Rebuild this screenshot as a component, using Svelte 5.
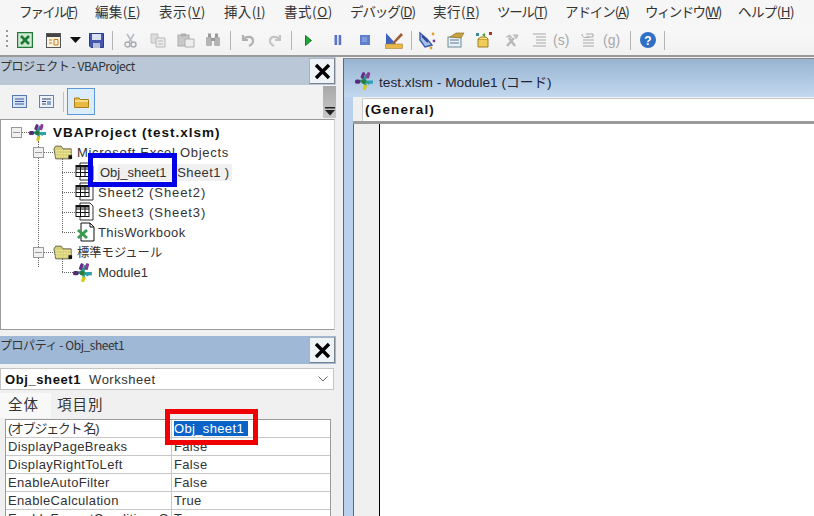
<script>
  const menus = [
    ['ファイル(', 'F', ')', 20, -1.9], ['編集(', 'E', ')', 96, 0.36], ['表示(', 'V', ')', 160, 0.58], ['挿入(', 'I', ')', 225, 0.34],
    ['書式(', 'O', ')', 285, 0.56], ['デバッグ(', 'D', ')', 351, -1.07], ['実行(', 'R', ')', 434, 0.5], ['ツール(', 'T', ')', 498, -1.33],
    ['アドイン(', 'A', ')', 566, -1.07], ['ウィンドウ(', 'W', ')', 646, -1.6], ['ヘルプ(', 'H', ')', 739, -0.6]
  ];
  const menuWidths = menus.map((m, i) => (i + 1 < menus.length ? menus[i + 1][3] - m[3] : 70));
  const props = [
    ['(オブジェクト 名)', 'Obj_sheet1', true],
    ['DisplayPageBreaks', 'False'],
    ['DisplayRightToLeft', 'False'],
    ['EnableAutoFilter', 'False'],
    ['EnableCalculation', 'True'],
    ['EnableFormatConditionsCalculation', 'True']
  ];
</script>

{#snippet moduleIcon(s)}
  <svg width={s} height={s} viewBox="0 0 18 18">
    <path d="M3 10 L9 9 L14 12 M9 9 L11 3 M9 9 L7 5 M9 9 L10 15" stroke="#2a9a8a" stroke-width="2.4" fill="none"/>
    <rect x="6" y="1" width="3" height="6" rx="1" fill="#6a2a8a" transform="rotate(20 7 4)"/>
    <rect x="11" y="1" width="3" height="6" rx="1" fill="#8a3a9a" transform="rotate(15 12 4)"/>
    <rect x="0" y="8" width="5" height="4" rx="1.5" fill="#5a2a7a"/>
    <rect x="12" y="9" width="5" height="3" fill="#30a0b0"/>
    <rect x="8" y="13" width="3" height="5" rx="1" fill="#d8c820" transform="rotate(20 9 15)"/>
    <circle cx="8" cy="10" r="2.2" fill="#2a7a3a"/>
  </svg>
{/snippet}

{#snippet folder()}
  <svg width="20" height="15" viewBox="0 0 22 16">
    <path d="M1 4 L3 1 H9 L11 4 H20 V15 H3 Z" fill="#d8d078" stroke="#5a5a48"/>
    <path d="M3 6 H20 M3 9 H20 M3 12 H18" stroke="#f4efb0" stroke-width="1" stroke-dasharray="2 1"/>
    <rect x="17" y="11" width="4" height="4" fill="#111"/>
  </svg>
{/snippet}

{#snippet sheet()}
  <svg width="21" height="20" viewBox="0 0 21 20">
    <path d="M5 1 H15 L18 4 V18 H5 Z" fill="#fff" stroke="#333"/>
    <rect x="1" y="3.5" width="13" height="11" fill="#fff" stroke="#111"/>
    <path d="M1 7 H14 M1 10.5 H14 M5.5 3.5 V14.5 M10 3.5 V14.5" stroke="#111"/>
    <path d="M1 4.5 H14" stroke="#111" stroke-width="2"/>
  </svg>
{/snippet}

<div class="app">
  <div class="menubar">
    {#each menus as m, i}
      <span class="menu" style="width:{menuWidths[i]}px;letter-spacing:{m[4]}px">{m[0]}<u>{m[1]}</u>{m[2]}</span>
    {/each}
  </div>

  <div class="toolbar">
    <span class="grip"></span>
    <svg class="ti m9" width="16" height="16" viewBox="0 0 16 16"><rect x="0.5" y="0.5" width="15" height="15" fill="#cfe8d0" stroke="#1f7a3a" stroke-width="1.4"/><path d="M4 4 L12 12 M12 4 L4 12" stroke="#1f7a3a" stroke-width="2.6"/></svg>
    <svg class="ti m13" width="15" height="15" viewBox="0 0 15 15"><rect x="0.5" y="0.5" width="14" height="14" fill="#fbf3e2" stroke="#555"/><rect x="1" y="1" width="13" height="3" fill="#444"/><path d="M3 7 H6 M3 10 H6 M8 6.5 H12 V12 H8 Z" stroke="#c8781e" fill="none"/></svg>
    <svg class="ti m9" width="11" height="6" viewBox="0 0 11 6"><path d="M0 0 H11 L5.5 6 Z" fill="#111"/></svg>
    <svg class="ti m8" width="15" height="15" viewBox="0 0 15 15"><path d="M0.5 0.5 H14.5 V14.5 H2 L0.5 13 Z" fill="#4458b0" stroke="#2c3a88"/><rect x="3" y="1" width="9" height="6" fill="#d8e0f4"/><rect x="4" y="10" width="7" height="5" fill="#b8c0d8"/></svg>
    <span class="sep m8"></span>
    <svg class="ti m11" width="13" height="15" viewBox="0 0 13 15"><path d="M3 1 L8 9 M10 1 L5 9" stroke="#b8bcc4" stroke-width="1.6"/><circle cx="3.5" cy="11.5" r="2.5" fill="none" stroke="#a8acb4" stroke-width="1.4"/><circle cx="9.5" cy="11.5" r="2.5" fill="none" stroke="#a8acb4" stroke-width="1.4"/></svg>
    <svg class="ti m13" width="16" height="15" viewBox="0 0 16 15"><path d="M1 1 H8 V10 H1 Z" fill="#dcdcdc" stroke="#c0c0c0"/><path d="M6 5 H15 V14 H6 Z" fill="#ececec" stroke="#b8b8b8"/><path d="M8 8 H13 M8 11 H13" stroke="#b8b8b8"/></svg>
    <svg class="ti m11" width="18" height="15" viewBox="0 0 18 15"><rect x="1" y="2" width="11" height="11" fill="#c8c8c8" stroke="#aaa"/><rect x="4" y="0.5" width="5" height="3" fill="#b0b0b0"/><path d="M8 6 H17 V14 H8 Z" fill="#eee" stroke="#b0b0b0"/></svg>
    <svg class="ti m10" width="16" height="14" viewBox="0 0 16 14"><rect x="1" y="4" width="6" height="9" rx="1" fill="#b4b4b4"/><rect x="9" y="4" width="6" height="9" rx="1" fill="#b4b4b4"/><rect x="3" y="0.5" width="3" height="4" fill="#999"/><rect x="10" y="0.5" width="3" height="4" fill="#999"/><rect x="6" y="5" width="4" height="3" fill="#999"/></svg>
    <span class="sep m9"></span>
    <svg class="ti m10" width="14" height="13" viewBox="0 0 14 13"><path d="M2 1 V6 H7 M2.5 5.5 C5 2 11 2 12 6 C12.5 9 10 11 8 12" fill="none" stroke="#b0b0b0" stroke-width="2.2"/></svg>
    <svg class="ti m13" width="14" height="13" viewBox="0 0 14 13"><path d="M12 1 V6 H7 M11.5 5.5 C9 2 3 2 2 6 C1.5 9 4 11 6 12" fill="none" stroke="#c4c4c4" stroke-width="2.2"/></svg>
    <span class="sep m9"></span>
    <svg class="ti m13" width="7" height="11" viewBox="0 0 7 11"><path d="M0.5 0.5 L6.5 5.5 L0.5 10.5 Z" fill="#22a838" stroke="#167a28"/></svg>
    <svg class="ti m22" width="8" height="10" viewBox="0 0 8 10"><rect x="0.5" width="2.6" height="10" fill="#5a74c8"/><rect x="4.6" width="2.6" height="10" fill="#5a74c8"/></svg>
    <svg class="ti m18" width="10" height="10" viewBox="0 0 10 10"><rect width="10" height="10" fill="#5f80cc"/><rect x="2" y="2" width="5" height="5" fill="#7f9cdc"/></svg>
    <svg class="ti m15" width="18" height="17" viewBox="0 0 18 17"><path d="M1 1 L1 12 L11 12 Z" fill="#3e62c4"/><path d="M7 11 L16 1 L18 3 L9 12 Z" fill="#a05a30"/><rect x="0.5" y="12" width="17" height="4.5" fill="#e8b84a" stroke="#a88030" stroke-width="0.6"/></svg>
    <span class="sep m8"></span>
    <svg class="ti m7" width="17" height="19" viewBox="0 0 17 19"><path d="M1 2 L8 8 L13 14 L6 16 L1 9 Z" fill="#a8c0e8" stroke="#3a5aa8" stroke-width="1.4"/><path d="M3 5 L9 11" stroke="#2a4a98" stroke-width="2"/><circle cx="14" cy="3" r="1.4" fill="#e0a020"/><circle cx="15" cy="10" r="1.4" fill="#7a3a9a"/><circle cx="12" cy="17" r="1.4" fill="#e0a020"/></svg>
    <svg class="ti m11" width="18" height="16" viewBox="0 0 18 16"><rect x="1" y="5" width="13" height="10" fill="#e8f0f4" stroke="#6a8a9a"/><path d="M3 8 H12 M3 11 H12" stroke="#5a7a9a"/><path d="M3 5 L9 1 H17 L14 6 Z" fill="#c8a040" stroke="#7a6a20" stroke-width="0.6"/></svg>
    <svg class="ti m10" width="17" height="16" viewBox="0 0 17 16"><path d="M3 7 H13 V15 H3 Z" fill="#f0cc58" stroke="#a08020"/><path d="M3 7 L6 5 H11 L13 7" fill="#f8e080" stroke="#a08020"/><rect x="1" y="1" width="3" height="3" fill="#3a8a9a"/><rect x="14" y="0" width="3" height="3" fill="#a03a2a"/><path d="M7 3 L10 1 V5 Z" fill="#4a9a3a"/></svg>
    <svg class="ti m13" width="14" height="13" viewBox="0 0 14 13"><path d="M2 12 L9 4 M10 12 L4 4" stroke="#b8b8b8" stroke-width="2.4"/><path d="M1 3 L5 1 L7 4 M8 1 H13 L11 5" fill="#c4c4c4" stroke="#b8b8b8"/></svg>
    <svg class="ti m13" width="14" height="14" viewBox="0 0 14 14"><path d="M1 1 H14 M4 4 H14 M4 7 H14 M4 10 H14 M1 13 H14" stroke="#a8a8a8"/></svg>
    <span class="dim s">(s)</span>
    <svg class="ti next" width="14" height="15" viewBox="0 0 14 15"><path d="M1 1 C1 5 5 5 8 4 M2 7 H13 M2 10 H13 M2 13 H13" stroke="#a8a8a8" fill="none"/><path d="M5 1 H12 V4 H5" fill="none" stroke="#a8a8a8"/></svg>
    <span class="dim g">(g)</span>
    <span class="sep m10"></span>
    <svg class="ti m9" width="16" height="16" viewBox="0 0 16 16"><circle cx="8" cy="8" r="8" fill="#2f6fc4"/><text x="8" y="12.5" text-anchor="middle" font-family="Liberation Sans" font-weight="700" font-size="12" fill="#fff">?</text></svg>
    <span class="sep m8"></span>
  </div>

  <div class="workspace">
    <div class="left">
      <div class="title project">
        <span>プロジェクト - VBAProject</span>
        <span class="close">
          <svg width="17" height="17" viewBox="0 0 17 17"><path d="M2 2 L15 15 M15 2 L2 15" stroke="#000" stroke-width="3.4"/></svg>
        </span>
      </div>
      <div class="ptools">
        <svg class="pi" width="15" height="13" viewBox="0 0 15 13"><rect x="0.5" y="0.5" width="14" height="12" fill="#d8e4f4" stroke="#5a78b0"/><path d="M3 4 H12 M3 6.5 H12 M3 9 H12" stroke="#3a5898"/></svg>
        <svg class="pi p2" width="15" height="13" viewBox="0 0 15 13"><rect x="0.5" y="0.5" width="14" height="12" fill="#eef2f8" stroke="#6a80a8"/><path d="M3 4 H12 M3 6.5 H7 M3 9 H7" stroke="#2a4070"/><rect x="8" y="6" width="4" height="4" fill="#8aa4d0"/></svg>
        <span class="psep"></span>
        <span class="active">
          <svg width="15" height="12" viewBox="0 0 15 12"><path d="M0.5 2 H5 L6.5 3.5 H14.5 V11.5 H0.5 Z" fill="#e8b840" stroke="#a88020"/><rect x="1" y="4" width="13" height="2" fill="#f6dc88"/></svg>
        </span>
        <span class="scroll">
          <svg width="10" height="9" viewBox="0 0 10 9"><path d="M0 0 H10 V1.5 H0 Z M0 3 H10 L5 8.5 Z" fill="#222"/></svg>
        </span>
      </div>
      <div class="tree">
        <span class="vline v1"></span>
        <span class="vline v2"></span>
        <span class="vline v3"></span>
        <div class="node d0 root">
          <span class="tog"></span><span class="dash d-r"></span>
          <span class="ic">{@render moduleIcon(18)}</span>
          <b>VBAProject (test.xlsm)</b>
        </div>
        <div class="node d1">
          <span class="tog"></span><span class="dash d-s"></span>
          <span class="ic">{@render folder()}</span>
          <span class="t sp10">Microsoft Excel Objects</span>
        </div>
        <div class="node d2">
          <span class="dash"></span><span class="ic">{@render sheet()}</span>
          <span class="t hl">Obj_sheet1<span class="paren">(Sheet1 )</span></span>
        </div>
        <div class="node d2">
          <span class="dash"></span><span class="ic">{@render sheet()}</span>
          <span class="t sp9">Sheet2 (Sheet2)</span>
        </div>
        <div class="node d2">
          <span class="dash"></span><span class="ic">{@render sheet()}</span>
          <span class="t sp9">Sheet3 (Sheet3)</span>
        </div>
        <div class="node d2">
          <span class="dash"></span>
          <span class="ic">
            <svg width="21" height="20" viewBox="0 0 21 20"><path d="M6 1 H15 L19 5 V19 H6 Z" fill="#fff" stroke="#111"/><path d="M15 1 V5 H19" fill="none" stroke="#111"/><path d="M3 8 L12 16 M12 8 L3 16" stroke="#3a9a50" stroke-width="3"/></svg>
          </span>
          <span class="t sp4">ThisWorkbook</span>
        </div>
        <div class="node d1">
          <span class="tog"></span><span class="dash d-s"></span>
          <span class="ic">{@render folder()}</span>
          <span class="t">標準モジュール</span>
        </div>
        <div class="node d2">
          <span class="dash d-m"></span>
          <span class="ic ic-m">{@render moduleIcon(20)}</span>
          <span class="t">Module1</span>
        </div>
      </div>

      <div class="title props">
        <span>プロパティ - Obj_sheet1</span>
        <span class="close">
          <svg width="17" height="17" viewBox="0 0 17 17"><path d="M2 2 L15 15 M15 2 L2 15" stroke="#000" stroke-width="3.4"/></svg>
        </span>
      </div>
      <div class="combo">
        <b>Obj_sheet1</b><span>Worksheet</span>
        <svg class="chev" width="10" height="6" viewBox="0 0 10 6"><path d="M0.5 0.5 L5 5 L9.5 0.5" fill="none" stroke="#666"/></svg>
      </div>
      <div class="tabs">
        <span class="tab on">全体</span>
        <span class="tab">項目別</span>
      </div>
      <div class="grid">
        {#each props as p}
          <div class="row">
            <span class="k" class:cjk={p[2]}>{p[0]}</span>
            <span class="v"><span class:sel={p[2]}>{p[1]}</span></span>
          </div>
        {/each}
      </div>
    </div>

    <div class="codewin">
      <div class="codetitle">
        {@render moduleIcon(19)}
        <span>test.xlsm - Module1 (コード)</span>
      </div>
      <div class="proc"><span>(General)</span></div>
      <div class="codebody">
        <div class="gutter"></div>
        <div class="code"></div>
      </div>
    </div>
  </div>

  <span class="mark blue"></span>
  <span class="mark red"></span>
</div>

<style>
  :global(body) { margin: 0; }
  .app {
    position: relative;
    width: 814px;
    height: 516px;
    overflow: hidden;
    background: #f0f0f0;
    font-family: "Noto Sans CJK JP", "Liberation Sans", sans-serif;
    color: #222;
    display: flex;
    flex-direction: column;
  }
  .menubar {
    height: 25px;
    padding: 0 0 4px 19px;
    display: flex;
    align-items: center;
    background: #f6f6f6;
    font-size: 13.5px;
    line-height: 20px;
    color: #333;
    flex: none;
    box-sizing: border-box;
  }
  .menu { flex: none; white-space: nowrap; }
  .toolbar {
    height: 32px;
    box-sizing: border-box;
    flex: none;
    display: flex;
    align-items: center;
    padding-left: 6px;
    background: linear-gradient(#f8f8f8, #f2f2f2);
    border-bottom: 2px solid #9a9a9a;
  }
  .grip {
    width: 2px;
    height: 20px;
    background: repeating-linear-gradient(#999 0 2px, transparent 2px 5px);
  }
  .ti { flex: none; }
  .sep { width: 1px; height: 19px; background: #b4b4b4; flex: none; }
  .m7 { margin-left: 7px; } .m8 { margin-left: 8px; } .m9 { margin-left: 9px; }
  .m10 { margin-left: 10px; } .m11 { margin-left: 11px; } .m13 { margin-left: 13px; }
  .m15 { margin-left: 15px; } .m18 { margin-left: 18px; } .m22 { margin-left: 22px; }
  .dim { font: 14px "Liberation Sans", sans-serif; color: #a8a8a8; flex: none; text-align: center; }
  .s { margin-left: 7px; width: 14px; }
  .next { margin-left: 14px; }
  .g { margin-left: 8px; width: 17px; }
  .workspace { flex: 1; display: flex; min-height: 0; }
  .left { width: 336px; flex: none; display: flex; flex-direction: column; }
  .title {
    display: flex;
    justify-content: space-between;
    font-size: 12px;
    letter-spacing: -0.45px;
    color: #333;
    flex: none;
    box-sizing: border-box;
  }
  .title > span:first-child { line-height: 18px; }
  .project { height: 28px; background: #b9c7d6; }
  .props { height: 28px; background: #9fb8d6; margin-top: 6px; }
  .close {
    width: 26px;
    height: 26px;
    margin: 1px 1px 0 0;
    box-sizing: border-box;
    background: #eef3f8;
    border: 1px solid #aab2bc;
    border-right-color: #7a828c;
    border-bottom-color: #7a828c;
    display: flex;
    align-items: center;
    justify-content: center;
  }
  .ptools {
    height: 33px;
    flex: none;
    display: flex;
    align-items: center;
    background: #f2f2f2;
    box-sizing: border-box;
    padding-left: 12px;
  }
  .pi { flex: none; }
  .p2 { margin-left: 12px; }
  .psep { width: 1px; height: 20px; background: #c0c0c0; margin-left: 9px; }
  .active {
    width: 28px;
    height: 27px;
    margin-left: 3px;
    box-sizing: border-box;
    border: 1px solid #5a9ad8;
    background: #dcecfa;
    display: flex;
    align-items: center;
    justify-content: center;
  }
  .scroll {
    margin-left: auto;
    width: 13px;
    height: 32px;
    background: linear-gradient(#a8a8a8, #c8c8c8);
    display: flex;
    align-items: flex-end;
    justify-content: center;
    padding-bottom: 2px;
    box-sizing: border-box;
  }
  .tree {
    position: relative;
    height: 211px;
    flex: none;
    box-sizing: border-box;
    margin-right: 1px;
    margin-top: 1px;
    background: #fff;
    border: 1px solid #9a9a9a;
    border-right-color: #d0d0d0;
    padding-top: 2px;
    font-size: 13px;
    color: #333;
  }
  .node {
    height: 20px;
    display: flex;
    align-items: center;
    white-space: nowrap;
    position: relative;
  }
  .d0 { padding-left: 10px; }
  .d1 { padding-left: 32px; }
  .d2 { padding-left: 61px; }
  .tog {
    width: 11px;
    height: 11px;
    box-sizing: border-box;
    border: 1px solid #999;
    background: linear-gradient(#999, #999) center / 7px 1px no-repeat, #f0f0f0;
    flex: none;
  }
  .dash {
    width: 13px;
    flex: none;
    border-top: 1px dotted #666;
  }
  .d-s { width: 9px; }
  .d-r { width: 7px; }
  .d-m { width: 11px; }
  .ic { display: flex; flex: none; margin-right: 4px; }
  .d2 .ic { margin-right: 2px; }
  .d2 .ic-m { margin-right: 5px; }
  .root b { font-family: "Liberation Sans", sans-serif; font-size: 13.5px; letter-spacing: 1px; color: #111; margin-left: 2px; }
  .t { font-family: "Liberation Sans", "Noto Sans CJK JP", sans-serif; font-size: 13px; }
  .d1 .t { font-size: 12.3px; }
  .d1 .sp10 { font-size: 13px; letter-spacing: 0.7px; }
  .sp9 { letter-spacing: 0.9px; }
  .sp4 { letter-spacing: 0.4px; }
  .hl { background: #f0f0f0; padding: 1px 2px 1px 2px; }
  .paren { margin-left: 6px; letter-spacing: 0.4px; }
  .vline { position: absolute; width: 0; border-left: 1px dotted #666; }
  .v1 { left: 37px; top: 21px; height: 126px; }
  .v2 { left: 61px; top: 38px; height: 74px; }
  .v3 { left: 61px; top: 138px; height: 14px; }
  .combo {
    height: 22px;
    flex: none;
    margin: 4px 2px 0 0;
    box-sizing: border-box;
    background: #fff;
    border: 1px solid #c4c4c4;
    display: flex;
    align-items: center;
    padding-left: 4px;
    font-size: 13px;
    color: #333;
    position: relative;
    font-family: "Liberation Sans", sans-serif;
    letter-spacing: 0.5px;
  }
  .combo b { color: #111; margin-right: 8px; letter-spacing: 0.6px; }
  .chev { position: absolute; right: 5px; top: 7px; }
  .tabs { height: 25px; flex: none; display: flex; margin-top: 3px; font-size: 14.5px; letter-spacing: 1px; }
  .tab { width: 53px; padding-left: 6px; box-sizing: border-box; line-height: 22px; background: #f0f0f0; color: #333; }
  .tab.on { width: 51px; padding-left: 8px; background: #f8f8f8; }
  .grid {
    margin: 1px 5px 0 5px;
    box-sizing: border-box;
    border: 1px solid #9a9a9a;
    background: #fff;
    outline: 1px solid #f0f0f0;
    flex: none;
    font-family: "Liberation Sans", "Noto Sans CJK JP", sans-serif;
    font-size: 13px;
    letter-spacing: 0.35px;
    color: #333;
  }
  .row {
    height: 18px;
    box-sizing: border-box;
    border-bottom: 1px solid #c8c8c8;
    display: flex;
    line-height: 17px;
  }
  .k {
    width: 166px;
    flex: none;
    padding-left: 2px;
    box-sizing: border-box;
    border-right: 1px solid #c8c8c8;
    white-space: nowrap;
    overflow: hidden;
  }
  .k.cjk { letter-spacing: -1.3px; }
  .v { padding-left: 2px; }
  .sel { background: #0a64c8; color: #fff; padding-right: 4px; display: inline-block; line-height: 15px; }
  .codewin {
    margin-left: 7px;
    flex: 1;
    margin-top: 1px;
    display: flex;
    flex-direction: column;
    border-left: 1px solid #666;
    border-top: 1px solid #8a8a8a;
    background: #b9d1ea;
    min-width: 0;
  }
  .codetitle {
    height: 38px;
    flex: none;
    display: flex;
    align-items: center;
    gap: 5px;
    padding: 5px 0 0 11px;
    box-sizing: border-box;
    font-family: "Liberation Sans", "Noto Sans CJK JP", sans-serif;
    font-size: 13.7px;
    color: #223;
    background: linear-gradient(#98b4d2, #c2d8ee);
  }
  .proc {
    height: 27px;
    flex: none;
    box-sizing: border-box;
    margin-left: 9px;
    padding: 1px 0 0 9px;
    background: #f0f0f0;
    border-bottom: 3px solid #9a9a9a;
    display: flex;
  }
  .proc span {
    flex: 1;
    background: #fff;
    font: 700 13.5px/22px "Liberation Sans", sans-serif;
    letter-spacing: 1.2px;
    padding-left: 2px;
    color: #111;
    border: 1px solid #c8c8c8;
    border-right: 0;
    border-bottom: 0;
    border-radius: 2px 0 0 0;
  }
  .codebody { flex: 1; display: flex; padding-left: 9px; min-height: 0; }
  .gutter { width: 25px; flex: none; background: #f0f0f0; border-left: 1px solid #666; border-right: 1px solid #000; }
  .code { flex: 1; background: #fff; }
  .mark { position: absolute; box-sizing: border-box; pointer-events: none; }
  .blue { left: 88px; top: 153px; width: 89px; height: 34px; border: 5px solid #0000e6; }
  .red { left: 165px; top: 409px; width: 93px; height: 36px; border: 5px solid #f00000; }
</style>
